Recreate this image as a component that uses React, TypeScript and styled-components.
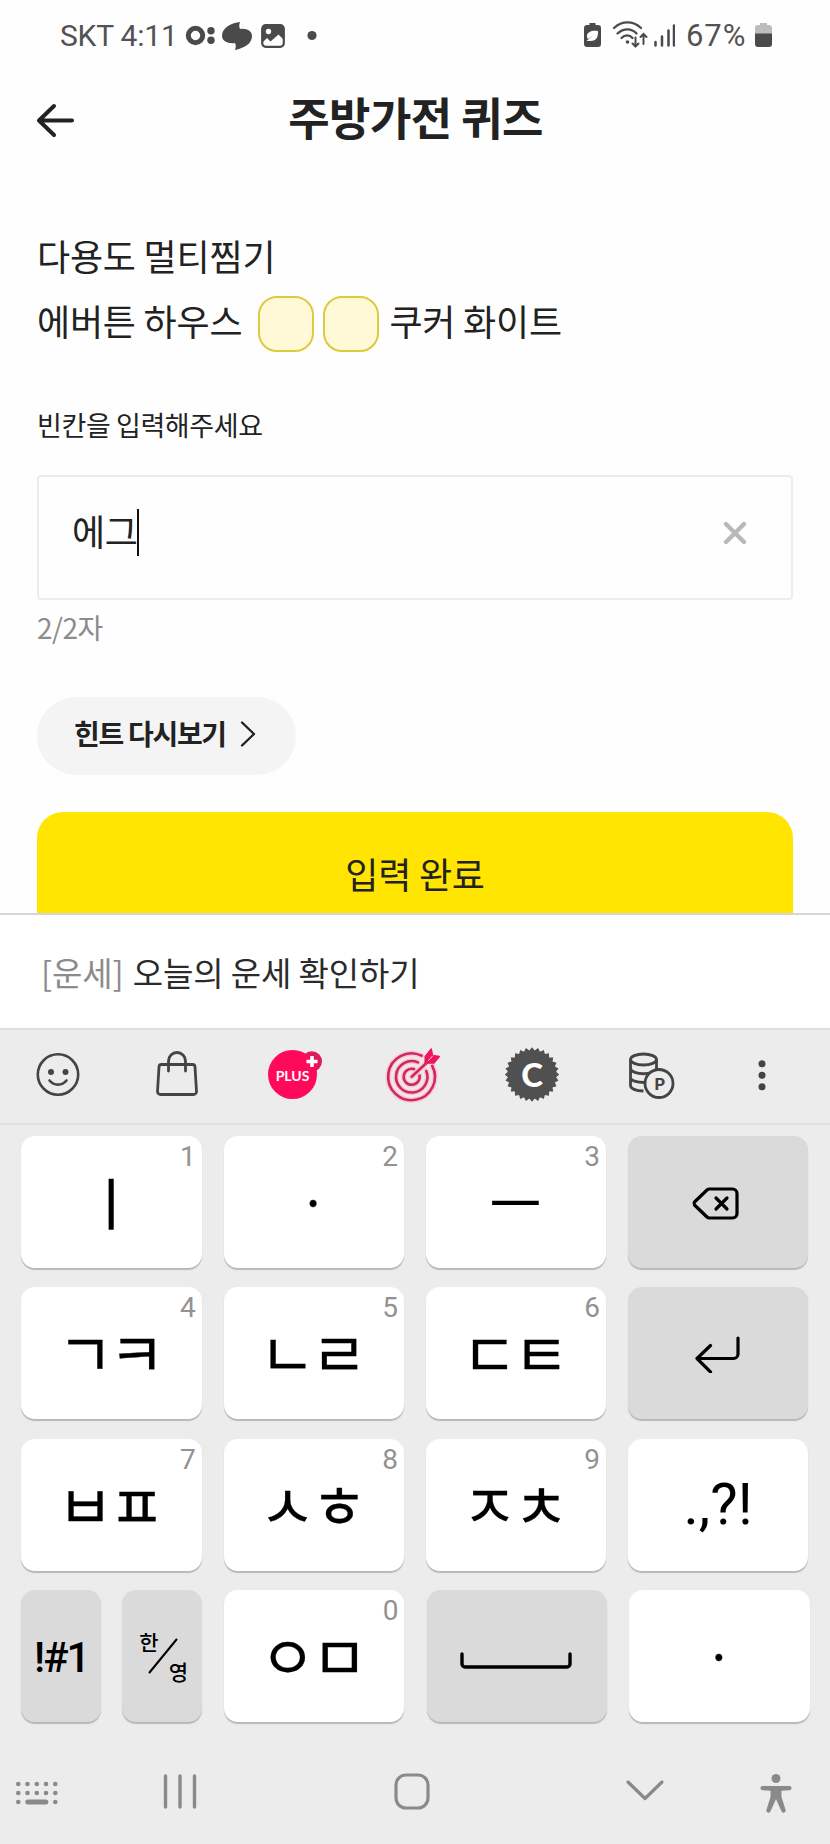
import React from "react";
import styled, { createGlobalStyle } from "styled-components";

const KR = '"Noto Sans CJK KR", "Noto Sans", sans-serif';
const LATIN = 'Roboto, "Noto Sans CJK KR", sans-serif';

const GlobalStyle = createGlobalStyle`
  * { box-sizing: border-box; }
  html, body { margin: 0; padding: 0; background: #fefefe; }
  body { font-family: ${KR}; color: #222; }
  button { border: 0; padding: 0; margin: 0; font: inherit; color: inherit; background: none; }
  svg { display: block; flex: none; }
`;

const Screen = styled.div`
  width: 830px;
  height: 1844px;
  display: flex;
  flex-direction: column;
  overflow: hidden;
  background: #fefefe;
`;

const StatusBar = styled.header`
  height: 70px;
  display: flex;
  align-items: center;
  justify-content: space-between;
  padding: 0 58px 0 60px;
  color: #525252;
  font-family: ${LATIN};
`;

const StatusGroup = styled.div`
  display: flex;
  align-items: center;
`;

const StatusText = styled.span<{ $size: number; $spacing: number; $width: number; $before?: number }>`
  width: ${(p) => p.$width}px;
  margin-left: ${(p) => p.$before ?? 0}px;
  padding-top: 1px;
  font-size: ${(p) => p.$size}px;
  line-height: 36px;
  font-weight: 400;
  letter-spacing: ${(p) => p.$spacing}px;
  white-space: nowrap;
`;

const TitleBar = styled.div`
  height: 100px;
  display: grid;
  grid-template-columns: 110px 1fr 110px;
  align-items: center;
`;

const BackButton = styled.button`
  height: 100px;
  padding-left: 36px;
  display: flex;
  align-items: center;
`;

const Title = styled.h1`
  margin: 0;
  padding: 0 0 6px 1px;
  text-align: center;
  font-size: 45px;
  line-height: 60px;
  font-weight: 700;
  letter-spacing: -0.6px;
  white-space: nowrap;
`;

const Content = styled.main`
  height: 743px;
  padding: 56px 37px 0;
  display: flex;
  flex-direction: column;
  align-items: flex-start;
  overflow: hidden;

  > * {
    flex: none;
  }
`;

const QuizLine = styled.p`
  margin: 0;
  height: 65px;
  display: flex;
  align-items: center;
  font-size: 36px;
  line-height: 52px;
  letter-spacing: -0.2px;
  white-space: nowrap;
`;

const QuizText = styled.span`
  padding-bottom: 7px;
`;

const BlankGroup = styled.span`
  display: flex;
  gap: 9px;
  margin: 0 10px 0 16px;
`;

const Blank = styled.span`
  width: 56px;
  height: 56px;
  border: 2px solid #dccb3c;
  border-radius: 19px;
  background: #fff9d8;
`;

const FieldLabel = styled.label`
  margin: 49px 0 0;
  height: 40px;
  font-size: 27px;
  line-height: 40px;
  letter-spacing: -0.4px;
`;

const Field = styled.div`
  margin-top: 30px;
  width: 756px;
  height: 125px;
  border: 2px solid #ececec;
  border-radius: 4px;
  display: flex;
  align-items: center;
  justify-content: space-between;
  padding: 0 44px 10px 33px;
`;

const FieldValue = styled.span`
  display: flex;
  align-items: center;
  font-size: 36px;
  line-height: 48px;
  letter-spacing: -0.3px;
`;

const Typed = styled.span`
  padding-bottom: 6px;
`;

const Caret = styled.i`
  width: 2px;
  height: 47px;
  margin-left: -1px;
  background: #111;
`;

const Counter = styled.div`
  margin: 7px 0 0 0;
  height: 40px;
  font-size: 28px;
  line-height: 40px;
  letter-spacing: -0.5px;
  color: #8c8c8c;
`;

const HintButton = styled.button`
  margin-top: 50px;
  width: 259px;
  height: 78px;
  border-radius: 39px;
  background: #f4f4f4;
  display: flex;
  align-items: center;
  gap: 13px;
  padding: 0 0 4px 37px;
  font-size: 28px;
  font-weight: 700;
  letter-spacing: -1.3px;
  white-space: nowrap;
`;

const HintText = styled.span`
  padding-bottom: 2px;
`;

const SubmitButton = styled.button`
  margin-top: 37px;
  width: 756px;
  height: 130px;
  padding-bottom: 9px;
  border-radius: 26px;
  background: #ffe500;
  font-size: 36px;
  letter-spacing: -0.2px;
`;

const Suggestion = styled.div`
  height: 117px;
  border-top: 2px solid #d6d6d6;
  border-bottom: 2px solid #dedede;
  background: #fff;
  padding: 1px 0 0 41px;
  display: flex;
  align-items: center;
  gap: 9px;
  font-size: 33px;
  letter-spacing: -0.1px;
  color: #2b2b2b;
`;

const Tag = styled.span`
  color: #8c8c8c;
`;

const Keyboard = styled.section`
  flex: 1;
  background: #ececec;
  display: flex;
  flex-direction: column;
`;

const Toolbar = styled.div`
  height: 95px;
  border-bottom: 2px solid #e2e2e2;
  display: grid;
  grid-template-columns: repeat(6, 118px) 108px;
  align-items: center;
  justify-items: center;
  padding-bottom: 1px;
`;

const KeyRows = styled.div`
  padding: 11px 21px 0 21.4px;
  display: flex;
  flex-direction: column;
  gap: 19.3px;
`;

const KeyRow = styled.div<{ $gap?: number }>`
  display: grid;
  grid-template-columns: repeat(4, 180.3px);
  column-gap: ${(p) => p.$gap ?? 21.9}px;
  height: 132px;
`;

const HalfKeys = styled.div`
  display: grid;
  grid-template-columns: 1fr 1fr;
  column-gap: 21px;
`;

const Key = styled.button<{ $dark?: boolean }>`
  position: relative;
  height: 132px;
  border-radius: 14px;
  background: ${(p) => (p.$dark ? "#dadada" : "#ffffff")};
  box-shadow: 0 2px 1px rgba(0, 0, 0, 0.22);
  display: flex;
  align-items: center;
  justify-content: center;
  color: #000;
`;

const KeyNumber = styled.span`
  position: absolute;
  top: 4px;
  right: 6px;
  font-family: ${LATIN};
  font-size: 28px;
  line-height: 33px;
  color: #929292;
`;

const Jamo = styled.span<{ $size: number; $spacing: number }>`
  font-size: ${(p) => p.$size}px;
  line-height: 66px;
  font-weight: 400;
  letter-spacing: ${(p) => p.$spacing}px;
  padding: 0 ${(p) => -p.$spacing}px 4px 0;
  margin-right: 1px;
  -webkit-text-stroke: 0.3px #000;
  white-space: nowrap;
`;

const Symbols = styled.span<{ $size: number; $weight: number; $top: number; $left: number; $spacing: number }>`
  font-family: ${LATIN};
  font-size: ${(p) => p.$size}px;
  font-weight: ${(p) => p.$weight};
  line-height: 1.2;
  letter-spacing: ${(p) => p.$spacing}px;
  padding: ${(p) => p.$top}px 0 0 ${(p) => p.$left}px;
`;

const Language = styled.span`
  display: grid;
  grid-template-columns: 22px 11px 20px;
  align-items: center;
  justify-items: center;
  font-size: 21px;
  line-height: 24px;
  font-weight: 500;
  height: 54px;
`;

const LangTop = styled.span`
  align-self: start;
  padding-left: 5px;
`;

const LangBottom = styled.span`
  align-self: end;
`;

const KeyIcon = styled.span<{ $right: number; $top: number }>`
  padding: ${(p) => p.$top}px ${(p) => p.$right}px 0 0;
`;

const NavBar = styled.nav`
  flex: 1;
  display: grid;
  grid-template-columns: 75px 209px 256px 209px 54px;
  align-items: start;
  justify-items: center;
  padding-top: 47px;
`;

const Dot = ({ x, y, r }: { x: number; y: number; r: number }) => <circle cx={x} cy={y} r={r} />;

const StatusIconsLeft = () => (
  <svg width="132" height="34" viewBox="0 0 132 34" fill="#4a4a4a">
    <circle cx="10.5" cy="17.5" r="7.2" fill="none" stroke="#4a4a4a" strokeWidth="5" />
    <Dot x={26} y={12.8} r={3.7} />
    <Dot x={26} y={22.3} r={3.7} />
    <path d="M55 4c-1 3-1 5 0 7 7-1 12 2 12 7 0 8-8 12-17 14 1-3 1-5 0-7-7 1-13-2-13-7 0-9 10-13 18-14z" />
    <rect x="77.2" y="7.2" width="21.6" height="21.6" rx="3.5" fill="none" stroke="#4a4a4a" strokeWidth="2.2" />
    <path d="M77 8h22v14l-5.500-5.500-8 7-3.500-3.500-5 5z" />
    <circle cx="83.500" cy="13.500" r="2.700" fill="#fefefe" />
    <Dot x={127} y={17.5} r={4.6} />
  </svg>
);

const StatusIconsMid = () => (
  <svg width="92" height="34" viewBox="0 0 92 34" fill="#4a4a4a">
    <path d="M6.500 5h6v2h2.500a3 3 0 0 1 3 3v16a3 3 0 0 1-3 3h-11a3 3 0 0 1-3-3v-16a3 3 0 0 1 3-3h2.500z" />
    <path d="M15 13c-6-1-11 1-11 5 0 1 0 2 1 3l5-4-6.500 6h4c5 0 8-3 7.500-10z" fill="#fefefe" />
    <g fill="none" stroke="#4a4a4a" strokeWidth="2.300" strokeLinecap="round">
      <path d="M31 10c8-7.500 19-7.500 27 0M34.500 15.500c6-5.500 14-5.500 19 0M38.500 20c3.500-3.500 8-3.500 11 0" />
      <path d="M52.500 19.500v9M49.500 25.500l3 3 3-3M60.500 26v-9.500M57.500 19l3-3 3 3" strokeWidth="2" />
      <path d="M72.500 24v3.500M79 18.500v9M85.500 12.500v15M91 7.500v20" strokeWidth="2.500" />
    </g>
    <Dot x={44.500} y={24} r={1.800} />
  </svg>
);

const Battery = () => (
  <svg width="17" height="34" viewBox="0 0 17 34">
    <path d="M5 5h7v2h2a3 3 0 0 1 3 3v6h-17v-6a3 3 0 0 1 3-3h2z" fill="#bdbdbd" />
    <path d="M0 15.500h17v10.500a3 3 0 0 1-3 3h-11a3 3 0 0 1-3-3z" fill="#4a4a4a" />
  </svg>
);

const Line = ({ w, h, d, sw, color = "#000" }: { w: number; h: number; d: string; sw: number; color?: string }) => (
  <svg width={w} height={h} viewBox={`0 0 ${w} ${h}`} fill="none" stroke={color} strokeWidth={sw} strokeLinecap="round" strokeLinejoin="round">
    <path d={d} />
  </svg>
);

const INK = "#444";

const Smiley = () => (
  <svg width="60" height="60" viewBox="0 0 60 60" fill="none" stroke={INK} strokeWidth="2.600" strokeLinecap="round">
    <circle cx="29" cy="28.500" r="20.200" />
    <path d="M20.500 34.500c4.500 5.500 12.500 5.500 17 0" />
    <g fill={INK} stroke="none">
      <Dot x={22} y={26} r={3} />
      <Dot x={36.5} y={26} r={3} />
    </g>
  </svg>
);

const Bag = () => (
  <svg width="60" height="60" viewBox="0 0 60 60" fill="none" stroke={INK} strokeWidth="2.800" strokeLinecap="round" strokeLinejoin="round">
    <path d="M14.500 18.500h31a2.500 2.500 0 0 1 2.500 2.500l1.500 24.500a3 3 0 0 1-3 3h-33a3 3 0 0 1-3-3l1.500-24.500a2.500 2.500 0 0 1 2.500-2.500z" />
    <path d="M21.500 25v-10a8.500 8.500 0 0 1 17 0v10" />
  </svg>
);

const PlusBadge = () => (
  <svg width="60" height="60" viewBox="0 0 60 60">
    <circle cx="46.800" cy="15.500" r="10.200" fill="#dc1a5c" />
    <circle cx="27.500" cy="28.500" r="24.500" fill="#ff0a5a" />
    <path d="M39 21a10.200 10.200 0 0 0 10 4.500" stroke="#dc1a5c" strokeWidth="1.500" fill="none" />
    <path d="M47 10v11M41.500 15.500h11" stroke="#fff" strokeWidth="3.600" />
    <text x="27.500" y="34.800" fill="#fff" fontFamily="Lato, sans-serif" fontSize="14" fontWeight="700" textAnchor="middle">PLUS</text>
  </svg>
);

const targetRings =
  "M49.200 19.800A23.400 23.400 0 1 1 38.700 9.700M43.300 25A15.700 15.700 0 1 1 34.900 16.400M36.600 29.500A8 8 0 1 1 31 23.100M28.700 30.800L44 16.500";

const Target = () => (
  <svg width="60" height="60" viewBox="0 0 60 60" fill="none" strokeLinecap="round" strokeLinejoin="round">
    <path d={targetRings} stroke="#f9cbd8" strokeWidth="5.600" />
    <path d={targetRings} stroke="#d0285c" strokeWidth="2.600" />
    <path d="M42.200 17v-6.300l6-7.700 1.300 6.500 6.800 1-5.300 6.500h-7z" fill="#ee1558" stroke="#ee1558" strokeWidth="1.500" />
    <path d="M45.500 14.500l4-4.500" stroke="#f9cbd8" strokeWidth="1" />
  </svg>
);

const gear = Array.from({ length: 56 }, (_, i) => {
  const a = (i / 56) * Math.PI * 2 - Math.PI / 2;
  const r = i % 2 ? 24.2 : 27.2;
  return `${(31 + r * Math.cos(a)).toFixed(2)},${(28.5 + r * Math.sin(a)).toFixed(2)}`;
}).join(" ");

const CoinC = () => (
  <svg width="60" height="60" viewBox="0 0 60 60">
    <polygon points={gear} fill="#505050" />
    <text x="31" y="40.500" fill="#fff" fontFamily="Lato, sans-serif" fontSize="33" fontWeight="900" textAnchor="middle">C</text>
  </svg>
);

const CoinStack = () => (
  <svg width="60" height="60" viewBox="0 0 60 60" fill="none" stroke={INK} strokeWidth="2.800">
    <ellipse cx="24.500" cy="13.500" rx="13" ry="5.500" />
    <path d="M11.500 13.500v26c0 3 5 5.500 13 5.500M37.500 13.500v10M11.500 22.500c1 7 25 7 26 0M11.500 31.500c0 3 6 5 14 5" />
    <circle cx="40" cy="37.500" r="14" fill="#ececec" />
    <text x="40.500" y="43.500" fill={INK} stroke="none" fontFamily="Lato, sans-serif" fontSize="17" fontWeight="900" textAnchor="middle">P</text>
  </svg>
);

const More = () => (
  <svg width="60" height="60" viewBox="0 0 60 60" fill={INK}>
    <Dot x={30} y={17.8} r={3.5} />
    <Dot x={30} y={29.3} r={3.5} />
    <Dot x={30} y={40.8} r={3.5} />
  </svg>
);

const NAV = "#8a8a8a";

const KeyboardIcon = () => (
  <svg width="44" height="44" viewBox="0 0 44 44" fill={NAV}>
    {[15, 24, 33].map((y, row) =>
      [2.3, 11.5, 20.8, 30, 39.3].filter((_, i) => row < 2 || i === 0 || i === 4).map((x) => <circle key={`${x}-${y}`} cx={x} cy={y} r="2.300" />)
    )}
    <rect x="9.300" y="30.600" width="23" height="5" rx="2.500" />
  </svg>
);

const Accessibility = () => (
  <svg width="34" height="44" viewBox="0 0 34 44" fill={NAV}>
    <circle cx="17" cy="9.500" r="4.500" />
    <path d="M3.500 17h27a2 2 0 0 1 0 4.200l-8 .6v6l4 13a2 2 0 0 1-4 1.500l-5.500-12-5.500 12a2 2 0 0 1-4-1.500l4-13v-6l-8-.6a2 2 0 0 1 0-4.200z" />
  </svg>
);

type LetterKeyProps = { num?: string; text: string; size?: number };

const LetterKey = ({ num, text, size = text.length > 1 ? 60.5 : 57 }: LetterKeyProps) => (
  <Key>
    {num && <KeyNumber>{num}</KeyNumber>}
    <Jamo $size={size} $spacing={text.length > 1 ? -4 : 0}>{text}</Jamo>
  </Key>
);

export default function App() {
  return (
    <Screen>
      <GlobalStyle />
      <StatusBar>
        <StatusGroup>
          <StatusText $size={30} $spacing={-0.2} $width={125}>SKT 4:11</StatusText>
          <StatusIconsLeft />
        </StatusGroup>
        <StatusGroup>
          <StatusIconsMid />
          <StatusText $size={31} $spacing={0.9} $width={69} $before={11}>67%</StatusText>
          <Battery />
        </StatusGroup>
      </StatusBar>
      <TitleBar>
        <BackButton aria-label="뒤로">
          <Line w={40} h={40} sw={4} color="#222" d="M3 20.500h33M18 6l-15 14.500 15 14.500" />
        </BackButton>
        <Title>주방가전 퀴즈</Title>
      </TitleBar>
      <Content>
        <QuizLine>
          <QuizText>다용도 멀티찜기</QuizText>
        </QuizLine>
        <QuizLine>
          <QuizText>에버튼 하우스</QuizText>
          <BlankGroup>
            <Blank />
            <Blank />
          </BlankGroup>
          <QuizText>쿠커 화이트</QuizText>
        </QuizLine>
        <FieldLabel>빈칸을 입력해주세요</FieldLabel>
        <Field>
          <FieldValue>
            <Typed>에그</Typed>
            <Caret />
          </FieldValue>
          <Line w={24} h={24} sw={4.4} color="#b8b8b8" d="M3 3l18 18M21 3l-18 18" />
        </Field>
        <Counter>2/2자</Counter>
        <HintButton>
          <HintText>힌트 다시보기</HintText>
          <Line w={18} h={28} sw={2.4} color="#222" d="M3 2.500l12 11.500-12 11.500" />
        </HintButton>
        <SubmitButton>입력 완료</SubmitButton>
      </Content>
      <Suggestion>
        <Tag>[운세]</Tag>
        <span>오늘의 운세 확인하기</span>
      </Suggestion>
      <Keyboard>
        <Toolbar>
          <Smiley />
          <Bag />
          <PlusBadge />
          <Target />
          <CoinC />
          <CoinStack />
          <More />
        </Toolbar>
        <KeyRows>
          <KeyRow>
            <LetterKey num="1" text="ㅣ" />
            <LetterKey num="2" text="·" size={50} />
            <LetterKey num="3" text="ㅡ" />
            <Key $dark aria-label="지우기">
              <KeyIcon $right={2} $top={2}>
                <Line w={52} h={34} sw={3.2} d="M18.500 3h23a4.500 4.500 0 0 1 4.500 4.500v20a4.500 4.500 0 0 1-4.500 4.500h-23q-1.500 0-2.500-1l-12.500-12q-1-1.500 0-3l12.500-12q1-1 2.500-1zM25 12l11 11M36 12l-11 11" />
              </KeyIcon>
            </Key>
          </KeyRow>
          <KeyRow>
            <LetterKey num="4" text="ㄱㅋ" />
            <LetterKey num="5" text="ㄴㄹ" />
            <LetterKey num="6" text="ㄷㅌ" />
            <Key $dark aria-label="줄바꿈">
              <KeyIcon $right={2} $top={1}>
                <Line w={46} h={38} sw={3.2} d="M44 3v16a4.500 4.500 0 0 1-4.500 4.500h-36.500M16.500 10.500l-13.500 13 13.500 13.500" />
              </KeyIcon>
            </Key>
          </KeyRow>
          <KeyRow>
            <LetterKey num="7" text="ㅂㅍ" />
            <LetterKey num="8" text="ㅅㅎ" />
            <LetterKey num="9" text="ㅈㅊ" />
            <Key>
              <Symbols $size={58} $weight={400} $top={0} $left={0} $spacing={0}>.,?!</Symbols>
            </Key>
          </KeyRow>
          <KeyRow $gap={22.4}>
            <HalfKeys>
              <Key $dark>
                <Symbols $size={42} $weight={500} $top={5} $left={0} $spacing={-2}>!#1</Symbols>
              </Key>
              <Key $dark>
                <Language>
                  <LangTop>한</LangTop>
                  <Line w={30} h={36} sw={2} d="M1.500 34.500l27-33" />
                  <LangBottom>영</LangBottom>
                </Language>
              </Key>
            </HalfKeys>
            <LetterKey num="0" text="ㅇㅁ" />
            <Key $dark aria-label="스페이스">
              <KeyIcon $right={2} $top={1}>
                <Line w={112} h={28} sw={3.4} d="M2 12v10a3 3 0 0 0 3 3h102a3 3 0 0 0 3-3v-10" />
              </KeyIcon>
            </Key>
            <LetterKey text="·" size={50} />
          </KeyRow>
        </KeyRows>
        <NavBar>
          <KeyboardIcon />
          <Line w={34} h={44} sw={3.4} color={NAV} d="M2.500 7v31M17 7v31M31.500 7v31" />
          <Line w={40} h={44} sw={3.2} color={NAV} d="M14 6h12a10 10 0 0 1 10 10v13a10 10 0 0 1-10 10h-12a10 10 0 0 1-10-10v-13a10 10 0 0 1 10-10z" />
          <Line w={40} h={44} sw={3.2} color={NAV} d="M3 13l17 16.500 17-16.500" />
          <Accessibility />
        </NavBar>
      </Keyboard>
    </Screen>
  );
}
